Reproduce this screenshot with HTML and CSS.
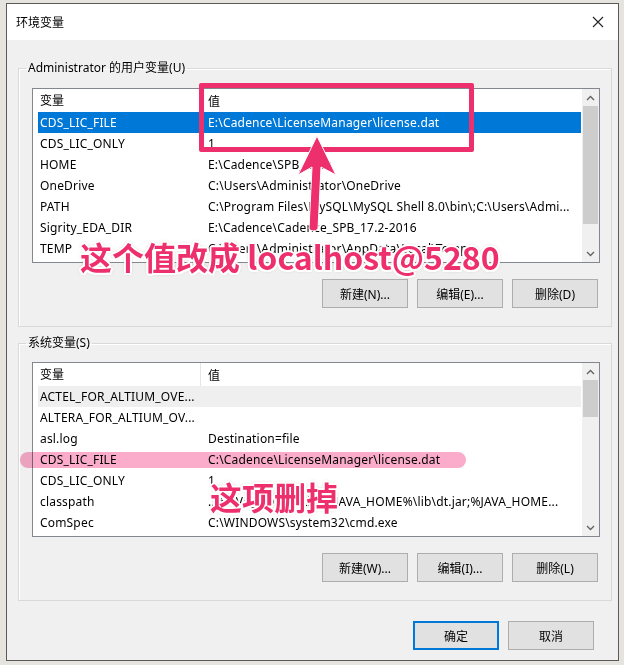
FILE: index.html
```html
<!doctype html>
<html>
<head>
<meta charset="utf-8">
<link rel="stylesheet" href="styles.css">
</head>
<body>
<div class="window">
	<div class="titlebar">
		<span class="title">环境变量</span>
		<span class="close">
			<svg width="12" height="12" viewBox="0 0 12 12"><path d="M1 1L11 11M11 1L1 11" stroke="#222" stroke-width="1.1" fill="none"/></svg>
		</span>
	</div>
	<div class="content">
		<fieldset class="group">
			<legend>Administrator 的用户变量(U)</legend>
			<div class="list">
				<div class="list_main">
					<div class="head"><span class="c1">变量</span><span class="c2">值</span></div>
					<div class="row sel"><span class="c1">CDS_LIC_FILE</span><span class="c2">E:\Cadence\LicenseManager\license.dat</span></div>
					<div class="row"><span class="c1">CDS_LIC_ONLY</span><span class="c2">1</span></div>
					<div class="row"><span class="c1">HOME</span><span class="c2">E:\Cadence\SPB_Data</span></div>
					<div class="row"><span class="c1">OneDrive</span><span class="c2">C:\Users\Administrator\OneDrive</span></div>
					<div class="row"><span class="c1">PATH</span><span class="c2">C:\Program Files\MySQL\MySQL Shell 8.0\bin\;C:\Users\Admi...</span></div>
					<div class="row"><span class="c1">Sigrity_EDA_DIR</span><span class="c2">E:\Cadence\Cadence_SPB_17.2-2016</span></div>
					<div class="row"><span class="c1">TEMP</span><span class="c2">C:\Users\Administrator\AppData\Local\Temp</span></div>
				</div>
				<div class="scroll">
					<div class="arr"><svg width="9" height="6" viewBox="0 0 9 6"><path d="M1 5L4.5 1.5L8 5" stroke="#606060" stroke-width="1.3" fill="none"/></svg></div>
					<div class="track"><div class="thumb thumb_user"></div></div>
					<div class="arr"><svg width="9" height="6" viewBox="0 0 9 6"><path d="M1 1L4.5 4.5L8 1" stroke="#606060" stroke-width="1.3" fill="none"/></svg></div>
				</div>
			</div>
			<div class="btns">
				<button>新建(N)...</button>
				<button>编辑(E)...</button>
				<button>删除(D)</button>
			</div>
		</fieldset>

		<fieldset class="group group_sys">
			<legend>系统变量(S)</legend>
			<div class="list">
				<div class="list_main">
					<div class="head"><span class="c1">变量</span><span class="c2">值</span></div>
					<div class="row dim"><span class="c1">ACTEL_FOR_ALTIUM_OVE...</span><span class="c2"></span></div>
					<div class="row"><span class="c1">ALTERA_FOR_ALTIUM_OV...</span><span class="c2"></span></div>
					<div class="row"><span class="c1">asl.log</span><span class="c2">Destination=file</span></div>
					<div class="row"><span class="c1">CDS_LIC_FILE</span><span class="c2">C:\Cadence\LicenseManager\license.dat</span></div>
					<div class="row"><span class="c1">CDS_LIC_ONLY</span><span class="c2">1</span></div>
					<div class="row"><span class="c1">classpath</span><span class="c2">.;%JAVA_HOME%\lib;%JAVA_HOME%\lib\dt.jar;%JAVA_HOME...</span></div>
					<div class="row"><span class="c1">ComSpec</span><span class="c2">C:\WINDOWS\system32\cmd.exe</span></div>
				</div>
				<div class="scroll">
					<div class="arr"><svg width="9" height="6" viewBox="0 0 9 6"><path d="M1 5L4.5 1.5L8 5" stroke="#606060" stroke-width="1.3" fill="none"/></svg></div>
					<div class="track"><div class="thumb thumb_sys"></div></div>
					<div class="arr"><svg width="9" height="6" viewBox="0 0 9 6"><path d="M1 1L4.5 4.5L8 1" stroke="#606060" stroke-width="1.3" fill="none"/></svg></div>
				</div>
			</div>
			<div class="btns">
				<button>新建(W)...</button>
				<button>编辑(I)...</button>
				<button>删除(L)</button>
			</div>
		</fieldset>

		<div class="dlg_btns">
			<button class="default">确定</button>
			<button>取消</button>
		</div>
	</div>
</div>

<!-- annotations drawn over the screenshot -->
<div class="mark_box"></div>
<svg class="mark_arrow" width="44" height="104" viewBox="295 130 44 104">
	<path d="M317 136 L336 175 L321 167 L318 229 Q313 233 309 229 L312 167 L298 175 Z" fill="#ee2f6d" stroke="#fff" stroke-width="1" stroke-linejoin="round"/>
</svg>
<div class="note note_top">这个值改成 localhost@5280</div>
<div class="mark_line"></div>
<div class="note note_bottom">这项删掉</div>
</body>
</html>
```

FILE: styles.css
```css
*{margin:0; padding:0; box-sizing:border-box;}
body{background:#e6e4df; font:12px "Noto Sans","Noto Sans CJK SC",sans-serif; color:#000; position:relative; height:665px; overflow:hidden;}

.window{margin:3px 0 0 6px; width:613px; height:658px; border:1px solid #5a5a5a; background:#f0f0f0;}
.titlebar{height:36px; background:#fff; display:flex; align-items:center; justify-content:space-between; padding-left:9px;}
.close{width:40px; display:flex; justify-content:center; align-items:center;}
.content{padding-top:20px;}

.group{margin:0 6px 0 11px; border:1px solid #d9d9d9; box-shadow:inset 1px 1px 0 #fff; padding:12px 11px 18px 13px;}
.group legend{margin-left:-6px; padding:0 2px; line-height:16px;}
.group_sys{margin-top:8px; padding-top:11px;}

.list{display:flex; height:175px; border:1px solid #828790; background:#fff; overflow:hidden;}
.list_main{flex:1; padding:0 1px 0 5px; overflow:hidden;}
.head{display:flex; height:23px; align-items:center;}
.head .c1{border-right:1px solid #e5e5e5; height:23px; line-height:23px;}
.row{display:flex; height:21px; align-items:center; white-space:nowrap; letter-spacing:0.18px;}
.c1{width:163px; padding-left:2px; white-space:nowrap; overflow:hidden; flex:none;}
.c2{padding-left:7px; white-space:nowrap;}
.row.sel{background:#0078d7; color:#fff;}
.row.dim{background:#efefef;}

.scroll{width:17px; background:#f0f0f0; display:flex; flex-direction:column; flex:none;}
.arr{height:17px; display:flex; align-items:center; justify-content:center; flex:none;}
.track{flex:1; padding:0 1px;}
.thumb{background:#cdcdcd;}
.thumb_user{height:118px;}
.thumb_sys{height:37px;}

.btns{display:flex; justify-content:flex-end; gap:9px; margin-top:16px; padding-right:2px;}
button{width:86px; height:29px; border:1px solid #adadad; background:#e1e1e1; font:inherit; color:#000;}
.dlg_btns{display:flex; justify-content:flex-end; gap:9px; margin:20px 24px 0 0;}
button.default{border:1px solid #0078d7; box-shadow:inset 0 0 0 1px #0078d7;}

.mark_box{position:absolute; left:199px; top:83px; width:275px; height:69px; border:5px solid #ee2f6d; border-radius:2px;}
.mark_arrow{position:absolute; left:295px; top:130px;}
.mark_line{position:absolute; left:20px; top:452px; width:446px; height:16px; border-radius:8px; background:rgba(245,90,150,0.5); mix-blend-mode:multiply;}
.note{position:absolute; font:700 32px/32px "Noto Sans CJK SC","Noto Sans",sans-serif; color:#ee2f6d; white-space:nowrap;
	text-shadow:2px 0 0 #fff,-2px 0 0 #fff,0 2px 0 #fff,0 -2px 0 #fff,1.5px 1.5px 0 #fff,-1.5px 1.5px 0 #fff,1.5px -1.5px 0 #fff,-1.5px -1.5px 0 #fff,0 0 4px rgba(0,0,0,0.3);}
.note_top{left:80px; top:240px;}
.note_bottom{left:210px; top:480px;}
```
